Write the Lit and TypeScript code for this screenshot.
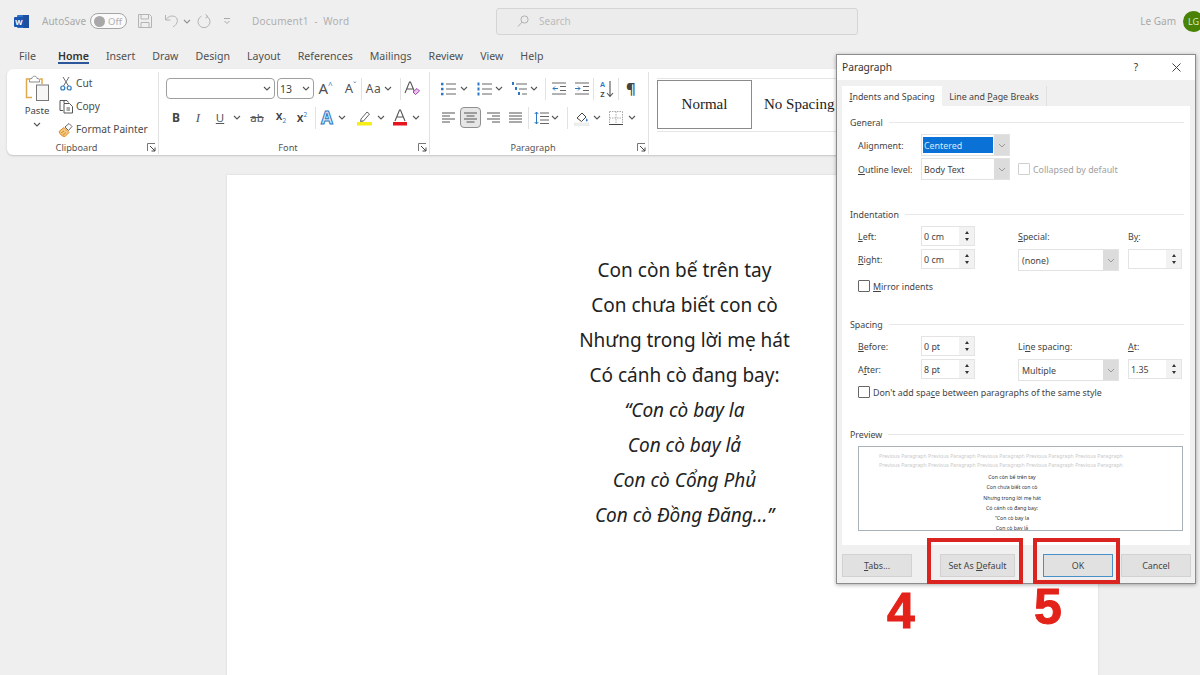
import { LitElement, html, css, svg, TemplateResult } from "lit";
import { customElement } from "lit/decorators.js";

type Item = [number, number, TemplateResult | string];

const chev = html`<svg width="8" height="5" viewBox="0 0 8 5"><path d="M1 1l3 3 3-3" fill="none" stroke="#555" stroke-width="1.1"/></svg>`;
const sep = html`<i class="vsep"></i>`;
const ic = (w: number, h: number, body: unknown) =>
  html`<svg width=${w} height=${h} viewBox="0 0 ${w} ${h}">${body}</svg>`;

/* Lays out a ribbon row from the icon centres measured on the ribbon */
function placed(left: number, items: Item[]) {
  let prev = left;
  return items.map(([cx, w, t]) => {
    const start = cx - w / 2;
    const m = start - prev;
    prev = start + w;
    return html`<span class="slot" style="margin-left:${m}px;width:${w}px">${t}</span>`;
  });
}

const lines = (ys: number[], x1: number, x2: number, c = "#666") =>
  ys.map((y) => svg`<path d="M${x1} ${y}H${x2}" stroke=${c} stroke-width="1"/>`);

const wordIcon = ic(15, 15, svg`<rect x="3" y="1" width="12" height="13" rx="1" fill="#2f72c8"/><rect x="9" y="1" width="6" height="13" fill="#1d4f9f"/><rect x="0" y="3" width="10" height="10" rx="1" fill="#1a56b0"/><text x="5" y="11" text-anchor="middle" font-size="7.5" font-weight="700" font-family="Noto Sans" fill="#fff">W</text>`);
const saveIcon = ic(16, 16, svg`<path d="M1.5 1.5h11l2 2v11h-13z M4 1.5v4.5h7.5v-4.5 M4 14.5v-5h8v5" fill="none" stroke="#b4b4b4" stroke-width="1"/>`);
const undoIcon = ic(16, 16, svg`<path d="M1.5 2v5h5 M1.5 7c3-4 7-5 10-3s2.500 7-2.500 10" fill="none" stroke="#b4b4b4" stroke-width="1"/>`);
const redoIcon = ic(15, 16, svg`<path d="M8.500 1.500l2.500 2-2.500 1.500 M9.500 3.200a6 6 0 1 1-5 0" fill="none" stroke="#b4b4b4" stroke-width="1"/>`);
const qatIcon = ic(8, 8, svg`<path d="M1 1.500h6 M1.500 4l2.500 2.500 2.500-2.500" fill="none" stroke="#aaa" stroke-width="1"/>`);
const searchIcon = ic(12, 12, svg`<circle cx="7.500" cy="4.500" r="3.600" fill="none" stroke="#b0b0b0"/><path d="M5 7.200L1 11.500" stroke="#b0b0b0"/>`);

const pasteIcon = ic(26, 27, svg`<path d="M8 4H2.500v18.500H8" fill="#fff" stroke="#e0a94f" stroke-width="1.500"/><path d="M15.500 4H18v5" fill="none" stroke="#e0a94f" stroke-width="1.500"/><path d="M5.500 5.500c0-2 1.500-2 2.500-2 0-3 5-3 5 0 1 0 2.500 0 2.500 2v1.500h-10z" fill="#fff" stroke="#8a8a8a"/><rect x="12.500" y="10" width="12" height="15.500" fill="#f6f6f6" stroke="#777"/>`);
const cutIcon = ic(12, 15, svg`<path d="M3 1l5.500 9 M9 1l-5.500 9" stroke="#6d6d6d" fill="none"/><circle cx="2.800" cy="12" r="2" fill="none" stroke="#2b79c2" stroke-width="1.200"/><circle cx="9.200" cy="12" r="2" fill="none" stroke="#2b79c2" stroke-width="1.200"/>`);
const copyIcon = ic(15, 15, svg`<path d="M5 1.500H1v10h3" fill="none" stroke="#555"/><path d="M5 1.500h3l1.500 2 M5 1.500V4" fill="none" stroke="#555"/><path d="M5 4.500h5.500l3 3v6.500H5z" fill="#fff" stroke="#555"/><path d="M7.500 9h3.500M7.500 11h3.500" stroke="#555"/>`);
const painterIcon = ic(16, 15, svg`<path d="M1 9.500l5-4 5 5-4 4c-3 0-5-2-6-5z" fill="#f3c77f" stroke="#e08a1e"/><path d="M7 5l4-3.500 3 3-3.500 4z" fill="#fff" stroke="#666"/><path d="M3 11l3-2 M5 13l3-2.500" stroke="#e08a1e"/>`);
const launcher = ic(9, 9, svg`<path d="M.5 8V.5H8" fill="none" stroke="#777"/><path d="M3 3l5 5M8 4.500V8H4.500" fill="none" stroke="#444"/>`);

const bigA = (size: number, arrow: string) => html`<span class="growa" style="font-size:${size}px">A<sup>${arrow}</sup></span>`;
const aText = html`<span class="atext">A</span>`;
const highlight = ic(16, 17, svg`<path d="M4 10l6-7 2.500 2-6 7-3 .5z" fill="#fff" stroke="#666"/><path d="M3 12h3" stroke="#888"/><rect x="0" y="13" width="15" height="3.500" fill="#f7ee19"/>`);
const fontColor = ic(16, 17, svg`<path d="M3 12L7.500 1h1L13 12 M5 8h6" fill="none" stroke="#555" stroke-width="1.100"/><rect x="1" y="13" width="14" height="3.500" fill="#e6141f"/>`);
const clearFmt = ic(16, 16, svg`<path d="M1 12L5.500 1h1L11 12 M3 8h6" fill="none" stroke="#555" stroke-width="1.100"/><path d="M9 11l4-3.500 2.500 2.500-4 3.500z" fill="#e9c6ec" stroke="#a23fae"/>`);
const strike = html`<span class="ab">ab</span>`;
const sub = html`<span class="xs">x<sub>2</sub></span>`;
const sup = html`<span class="xs">x<sup>2</sup></span>`;

const blue = "#2b79c2";
const bullets = ic(15, 14, svg`${[2, 7, 12].map((y) => svg`<rect x="0" y=${y - 1.2} width="2.500" height="2.500" fill=${blue}/>`)}${lines([2, 7, 12], 5, 15)}`);
const numbers = ic(15, 14, svg`${[2, 7, 12].map((y) => svg`<rect x=".5" y=${y - 1.5} width="2" height="3" fill=${blue}/>`)}${lines([2, 7, 12], 5, 15)}`);
const multilevel = ic(15, 14, svg`<rect x="0" y="0" width="2" height="3" fill=${blue}/><rect x="3" y="5" width="2" height="3" fill=${blue}/><rect x="6" y="10" width="2" height="3" fill=${blue}/>${lines([2], 4, 15)}${lines([7], 7, 15)}${lines([12], 10, 15)}`);
const indentDec = ic(14, 13, svg`${lines([1, 12], 0, 14)}${lines([4.500, 8.500], 8, 14)}<path d="M6 6.500H1M3 4.500L1 6.500l2 2" fill="none" stroke=${blue}/>`);
const indentInc = ic(14, 13, svg`${lines([1, 12], 0, 14)}${lines([4.500, 8.500], 8, 14)}<path d="M0 6.500h5M3 4.500l2 2-2 2" fill="none" stroke=${blue}/>`);
const sortIcon = ic(16, 18, svg`<text x="4.500" y="7" text-anchor="middle" font-size="7.500" font-family="Noto Sans" fill=${blue} font-weight="600">A</text><text x="4.500" y="17" text-anchor="middle" font-size="7.500" font-family="Noto Sans" fill="#444" font-weight="600">Z</text><path d="M12 1v15M9 13l3 3.500 3-3.500" fill="none" stroke="#555" stroke-width="1.100"/>`);
const pilcrow = html`<span class="pil">¶</span>`;
const alignL = ic(13, 11, svg`<path d="M0 1h13M0 4h8M0 7h13M0 10h8" stroke="#555"/>`);
const alignC = ic(13, 11, svg`<path d="M0 1h13M2.500 4h8M0 7h13M2.500 10h8" stroke="#555"/>`);
const alignR = ic(13, 11, svg`<path d="M0 1h13M5 4h8M0 7h13M5 10h8" stroke="#555"/>`);
const alignJ = ic(13, 11, svg`<path d="M0 1h13M0 4h13M0 7h13M0 10h13" stroke="#555"/>`);
const lineSp = ic(15, 14, svg`${lines([2, 5.500, 9, 12.500], 6, 15)}<path d="M2.500 1v12M.7 3l1.800-2 1.800 2M.7 11l1.800 2 1.800-2" fill="none" stroke=${blue}/>`);
const shading = ic(16, 16, svg`<path d="M3 8l5-5 4 4-4.500 4.500z" fill="#fff" stroke="#444"/><path d="M12.500 8c1 1.500 1.500 2 1 3-.8 1-2 0-1.500-1z" fill=${blue}/><rect x="0" y="13" width="15" height="3" fill="#f0f0f0" stroke="#ddd" stroke-width=".5"/>`);
const borders = ic(14, 14, svg`<path d="M.5.500h13M.5 7h13M7 .500v13M.5.500v13M13.500.500v13" stroke="#aaa" stroke-dasharray="1.500 1" fill="none"/><path d="M0 13.500h14" stroke="#444"/>`);

const fontRow1: Item[] = [
  [325.5, 16, bigA(15, "^")], [350.5, 16, bigA(13, "ˇ")], [361, 1, sep],
  [379, 26, html`<span class="aa">Aa ${chev}</span>`], [400, 1, sep], [412, 16, clearFmt],
];
const fontRow2: Item[] = [
  [176, 14, html`<b class="b">B</b>`], [198, 14, html`<i class="it">I</i>`], [220, 14, html`<span class="un">U</span>`], [237, 8, chev],
  [257, 18, strike], [281, 16, sub], [302, 16, sup], [315, 1, sep], [327, 16, aText], [342, 8, chev],
  [365, 16, highlight], [381, 8, chev], [400, 16, fontColor], [416, 8, chev],
];
const paraRow1: Item[] = [
  [448, 15, bullets], [464, 8, chev], [484, 15, numbers], [499, 8, chev], [519, 15, multilevel], [534, 8, chev], [545, 1, sep],
  [558.5, 14, indentDec], [581.5, 14, indentInc], [593, 1, sep], [605.5, 16, sortIcon], [618, 1, sep], [631, 12, pilcrow],
];
const paraRow2: Item[] = [
  [448, 13, alignL], [470.5, 21, html`<span class="pressed">${alignC}</span>`], [493, 13, alignR], [515, 13, alignJ], [528, 1, sep],
  [541, 15, lineSp], [555, 8, chev], [567, 1, sep], [581.5, 16, shading], [597, 8, chev], [616, 14, borders], [632, 8, chev],
];

const tabs = ["File", "Home", "Insert", "Draw", "Design", "Layout", "References", "Mailings", "Review", "View", "Help"];
const poem = ["Con còn bế trên tay", "Con chưa biết con cò", "Nhưng trong lời mẹ hát", "Có cánh cò đang bay:"];
const poemIt = ["“Con cò bay la", "Con cò bay lả", "Con cò Cổng Phủ", "Con cò Đồng Đăng…”"];
const prevLine = "Previous Paragraph Previous Paragraph Previous Paragraph Previous Paragraph Previous Paragraph";
const previewText = ["Con còn bế trên tay", "Con chưa biết con cò", "Nhưng trong lời mẹ hát", "Có cánh cò đang bay:", "“Con cò bay la", "Con cò bay lả"];

const chevGray = html`<svg width="8" height="5" viewBox="0 0 8 5"><path d="M1 1l3 3 3-3" fill="none" stroke="#999"/></svg>`;
const spin = (v: string) => html`<span class="spin"><span class="val">${v}</span><span class="arrows"><span class="up"></span><span class="dn"></span></span></span>`;
const select = (v: string, cls = "", sel = false) => html`<span class="select ${cls}"><span class="val ${sel ? "sel" : ""}">${v}</span><span class="drop">${chevGray}</span></span>`;

@customElement("app-root")
export class AppRoot extends LitElement {
  static styles = css`
    :host { display: block; width: 1200px; height: 675px; overflow: hidden; position: relative; background: #efefef; font-family: "Noto Sans", "Open Sans", sans-serif; color: #444; }
    svg { display: block; }
    .title { height: 42px; display: flex; align-items: center; padding-left: 14px; font-size: 10px; color: #a9a9a9; }
    .autosave { margin-left: 13px; width: 48px; }
    .toggle { width: 37px; height: 16px; box-sizing: border-box; border: 1px solid #a5a5a5; border-radius: 9px; background: #fafafa; display: flex; align-items: center; gap: 3px; padding-left: 3px; font-size: 9.5px; color: #b0b0b0; }
    .knob { width: 11px; height: 11px; border-radius: 50%; background: #a8a8a8; }
    .save { margin-left: 10px; }
    .undo { margin-left: 11px; }
    .uchev { margin-left: 3px; opacity: .6; }
    .redo { margin-left: 6px; }
    .qat { margin-left: 11px; }
    .doc { margin-left: 21px; width: 244px; letter-spacing: .2px; color: #b0b0b0; }
    .search { width: 362px; height: 27px; box-sizing: border-box; border: 1px solid #d5d5d5; border-radius: 3px; background: #ececec; display: flex; align-items: center; padding-left: 20px; gap: 10px; color: #bbb; }
    .user { margin-left: auto; display: flex; align-items: center; gap: 7px; margin-right: -4px; }
    .avatar { width: 21px; height: 21px; border-radius: 50%; background: #498205; color: #dcecc8; font-size: 9px; display: flex; align-items: center; justify-content: center; }

    .tabs { height: 27px; display: flex; align-items: center; gap: 17px; padding-left: 19px; font-size: 10.6px; color: #505050; box-sizing: border-box; }
    .tab { position: relative; }
    .tab.on { font-weight: 600; color: #333; margin-left: 5px; }
    .tab.on::after { content: ""; position: absolute; left: 0; right: 0; bottom: -1px; height: 2px; background: #2b579a; }

    .ribbon { margin-left: 7px; width: 1186px; height: 86px; box-sizing: border-box; background: #fff; border-radius: 6px; box-shadow: 0 1px 2px #c4c4c4; display: flex; padding: 3px 0 1px; }
    .group { position: relative; border-right: 1px solid #e2e2e2; display: flex; flex-direction: column; box-sizing: border-box; }
    .g-clip { width: 152px; }
    .g-font { width: 271px; }
    .g-para { width: 219px; }
    .gbody { flex: 1; }
    .glabel { height: 14px; display: flex; align-items: center; justify-content: center; font-size: 9.2px; color: #555; position: relative; padding-right: 12px; }
    .launch { position: absolute; right: 2px; top: 3px; }

    .clip { display: flex; padding-left: 13px; padding-top: 3px; }
    .paste { width: 34px; display: flex; flex-direction: column; align-items: center; font-size: 9.6px; color: #444; }
    .paste span { margin-top: 2px; line-height: 14px; }
    .paste svg:last-child { margin-top: 4px; }
    .cliplist { margin-left: 4px; display: flex; flex-direction: column; gap: 7px; font-size: 10.2px; color: #4a4a4a; }
    .clipitem { display: flex; align-items: center; height: 16px; }
    .clipicon { width: 16px; display: flex; justify-content: center; margin-right: 2px; }

    .r1 { display: flex; height: 28px; align-items: center; padding-top: 5px; box-sizing: border-box; }
    .r2 { display: flex; height: 23px; align-items: center; margin-top: 6px; }
    .slot { flex: none; display: flex; align-items: center; justify-content: center; height: 22px; }
    .vsep { display: block; width: 1px; height: 22px; background: #e2e2e2; }
    .combo { box-sizing: border-box; height: 21px; border: 1px solid #9f9f9f; border-radius: 4px; display: flex; align-items: center; justify-content: flex-end; padding-right: 3px; font-size: 10.5px; flex: none; }
    .c-name { width: 109px; margin-left: 7px; }
    .c-size { width: 37px; margin-left: 2px; justify-content: space-between; padding-left: 2px; }
    .growa { color: #505050; line-height: 1; }
    .growa sup { font-size: 8px; color: #2b79c2; vertical-align: top; line-height: 1; }
    .atext { font-size: 17px; line-height: 1; font-weight: 700; color: #d8e9f8; -webkit-text-stroke: 1px #2b79c2; }
    .aa { font-size: 12px; display: flex; gap: 3px; align-items: center; color: #555; letter-spacing: .5px; }
    .b { font-family: "Noto Sans"; font-size: 12px; color: #444; }
    .it { font-family: "Liberation Serif"; font-size: 13px; color: #555; }
    .un { font-size: 11.5px; text-decoration: underline; color: #555; }
    .ab { font-size: 11.5px; text-decoration: line-through; color: #555; }
    .xs { font-size: 12px; font-weight: 600; color: #444; line-height: 1; }
    .xs sub, .xs sup { font-size: 6.5px; color: #2b79c2; font-weight: 400; line-height: 1; }
    .pil { font-size: 15px; font-weight: 600; color: #444; line-height: 1; }
    .pressed { width: 21px; height: 21px; box-sizing: border-box; background: #e6e6e6; border: 1px solid #8f8f8f; border-radius: 4px; display: flex; align-items: center; justify-content: center; }

    .g-styles { flex: 1; border: 0; }
    .gallery { display: flex; height: 52px; margin: 6px 0 0 8px; border-top: 1px solid #e5e5e5; border-bottom: 1px solid #e5e5e5; font-family: "Liberation Serif", serif; font-size: 15px; color: #222; }
    .st { display: flex; align-items: center; justify-content: center; box-sizing: border-box; }
    .st.n { width: 95px; height: 49px; margin-top: 1px; border: 1.5px solid #8a8a8a; }
    .st.s { padding-left: 12px; white-space: nowrap; height: 50px; }

    .page { margin: 20px 0 0 227px; width: 871px; height: 520px; background: #fff; box-shadow: 0 0 2px #cfcfcf; box-sizing: border-box; padding: 78px 0 0 44px; text-align: center; font-size: 19px; line-height: 35px; color: #222; }
    .page em { display: block; }
    .page div { white-space: nowrap; }

    .dialog { position: absolute; left: 836px; top: 54px; width: 360px; height: 530px; box-sizing: border-box; background: #f0f0f0; border: 1px solid #8c8c8c; box-shadow: 0 1px 4px #00000055; display: flex; flex-direction: column; font-size: 8.9px; color: #444; }
    .dtitle { height: 25px; flex: none; background: #fff; display: flex; align-items: center; padding: 0 0 1px 5px; box-sizing: border-box; font-size: 10.2px; color: #333; }
    .dq { margin-left: auto; margin-right: 34px; font-size: 10px; }
    .dx { margin-right: 14px; }
    .dtabs { display: flex; padding: 6px 0 0 5px; height: 26px; box-sizing: border-box; flex: none; }
    .dtab { height: 20px; display: flex; align-items: center; justify-content: center; box-sizing: border-box; }
    .dtab.on { width: 100px; background: #fff; }
    .dtab.off { width: 105px; background: #f0f0f0; border-right: 1px solid #e0e0e0; }
    .panel { margin: 0 5px; height: 439px; flex: none; background: #fff; box-sizing: border-box; padding: 9px 6px 0 8px; }
    .legend { display: flex; align-items: center; gap: 6px; height: 14px; margin-bottom: 5px; }
    .legend::after { content: ""; flex: 1; height: 1px; background: #e8e8e8; }
    .form { display: grid; grid-template-columns: 63px 97px 110px 54px; grid-auto-rows: 23px; margin-left: 8px; align-items: start; }
    .form.wide { grid-auto-rows: 24px; }
    .form span.lbl { line-height: 22px; }
    .form.wide span.lbl { line-height: 24px; }
    .gap-gen { height: 25px; }
    .gap-mir { height: 7px; }
    .gap-sp { height: 24px; }
    .gap-dont { height: 3px; }
    .gap-prev { height: 28px; }
    .check { display: flex; align-items: center; gap: 3px; height: 14px; margin-left: 8px; }
    .check i { width: 12px; height: 12px; box-sizing: border-box; border: 1px solid #666; background: #fff; flex: none; border-radius: 1px; }
    .check.dis { margin: 0; height: 22px; color: #a0a0a0; }
    .check.dis i { border-color: #cfcfcf; }
    .spin { width: 54px; height: 20px; box-sizing: border-box; border: 1px solid #e4e4e4; display: flex; align-items: center; background: #fff; }
    .spin .val { flex: 1; padding-left: 2px; }
    .arrows { width: 15px; height: 18px; background: #f2f2f2; display: flex; flex-direction: column; align-items: center; justify-content: center; gap: 4px; }
    .up, .dn { width: 0; height: 0; border-left: 2.500px solid transparent; border-right: 2.500px solid transparent; }
    .up { border-bottom: 3px solid #333; }
    .dn { border-top: 3px solid #333; }
    .select { height: 22px; box-sizing: border-box; border: 1px solid #e2e2e2; display: flex; align-items: stretch; background: #fff; }
    .select.s89 { width: 89px; }
    .select.s101 { width: 101px; }
    .select .val { flex: 1; display: flex; align-items: center; padding-left: 1px; margin: 2px 1px; }
    .select.s101 .val { padding-left: 2px; }
    .select .val.sel { background: #0a72d6; color: #d8e8f8; }
    .drop { width: 15px; background: #dcdcdc; display: flex; align-items: center; justify-content: center; flex: none; }
    .box { margin-left: 8px; width: 325px; height: 85px; box-sizing: border-box; border: 1px solid #a9b2b8; overflow: hidden; text-align: center; font-size: 5.2px; color: #333; padding-top: 5px; }
    .box .prev { color: #c9c9c9; line-height: 9px; white-space: nowrap; text-align: left; padding-left: 20px; }
    .box .cur { line-height: 10.300px; height: 10.300px; padding-right: 17px; }
    .box .first { margin-top: 2px; }
    .foot { display: flex; padding: 9px 0 0 5px; }
    .btn { height: 23px; box-sizing: border-box; background: #e1e1e1; border: 1px solid #d2d2d2; display: flex; align-items: center; justify-content: center; flex: none; }
    .b-tabs { width: 70px; margin-right: 28px; }
    .b-def { width: 75px; margin-right: 28px; }
    .b-ok { width: 70px; margin-right: 8px; border-color: #4a90c8; }
    .b-can { width: 70px; }

    .mark { position: absolute; border: 4px solid #d9241f; box-sizing: border-box; top: 538px; height: 46px; }
    .m4 { left: 927px; width: 96px; }
    .m5 { left: 1033px; width: 87px; }
    .num { position: absolute; font-family: "Liberation Sans", sans-serif; font-weight: 700; font-size: 50px; line-height: 58px; color: #e32219; -webkit-text-stroke: 1px #e32219; }
    .n4 { left: 887px; top: 582px; }
    .n5 { left: 1034px; top: 578px; }
  `;

  render() {
    return html`
      <div class="title">
        ${wordIcon}
        <span class="autosave">AutoSave</span>
        <span class="toggle"><span class="knob"></span>Off</span>
        <span class="save">${saveIcon}</span>
        <span class="undo">${undoIcon}</span>
        <span class="uchev">${chev}</span>
        <span class="redo">${redoIcon}</span>
        <span class="qat">${qatIcon}</span>
        <span class="doc">Document1 &nbsp;-&nbsp; Word</span>
        <span class="search">${searchIcon}<span>Search</span></span>
        <span class="user"><span>Le Gam</span><span class="avatar">LG</span></span>
      </div>
      <div class="tabs">${tabs.map((t) => html`<span class="tab ${t === "Home" ? "on" : ""}">${t}</span>`)}</div>
      <div class="ribbon">
        <section class="group g-clip">
          <div class="gbody clip">
            <div class="paste">${pasteIcon}<span>Paste</span>${chev}</div>
            <div class="cliplist">
              <div class="clipitem"><span class="clipicon">${cutIcon}</span>Cut</div>
              <div class="clipitem"><span class="clipicon">${copyIcon}</span>Copy</div>
              <div class="clipitem"><span class="clipicon">${painterIcon}</span>Format Painter</div>
            </div>
          </div>
          <div class="glabel">Clipboard<span class="launch">${launcher}</span></div>
        </section>
        <section class="group g-font">
          <div class="gbody">
            <div class="r1">
              <span class="combo c-name">${chev}</span>
              <span class="combo c-size"><span>13</span>${chev}</span>
              ${placed(314, fontRow1)}
            </div>
            <div class="r2">${placed(159, fontRow2)}</div>
          </div>
          <div class="glabel">Font<span class="launch">${launcher}</span></div>
        </section>
        <section class="group g-para">
          <div class="gbody">
            <div class="r1">${placed(430, paraRow1)}</div>
            <div class="r2">${placed(430, paraRow2)}</div>
          </div>
          <div class="glabel">Paragraph<span class="launch">${launcher}</span></div>
        </section>
        <section class="group g-styles">
          <div class="gallery">
            <span class="st n">Normal</span>
            <span class="st s">No Spacing</span>
          </div>
        </section>
      </div>
      <main class="page">
        ${poem.map((l) => html`<div>${l}</div>`)}
        ${poemIt.map((l) => html`<div><em>${l}</em></div>`)}
      </main>

      <div class="dialog">
        <div class="dtitle">Paragraph<span class="dq">?</span><span class="dx">${ic(9, 9, svg`<path d="M.5.500l8 8M8.500.500l-8 8" stroke="#444"/>`)}</span></div>
        <div class="dtabs">
          <span class="dtab on"><span><u>I</u>ndents and Spacing</span></span>
          <span class="dtab off"><span>Line and <u>P</u>age Breaks</span></span>
        </div>
        <div class="panel">
          <div class="legend">General</div>
          <div class="form wide">
            <span class="lbl">Ali<u>g</u>nment:</span>${select("Centered", "s89", true)}<span></span><span></span>
            <span class="lbl"><u>O</u>utline level:</span>${select("Body Text", "s89")}
            <span class="check dis"><i></i>Collapsed by default</span><span></span>
          </div>
          <div class="gap-gen"></div>
          <div class="legend">Indentation</div>
          <div class="form">
            <span class="lbl"><u>L</u>eft:</span>${spin("0 cm")}<span class="lbl"><u>S</u>pecial:</span><span class="lbl">B<u>y</u>:</span>
            <span class="lbl"><u>R</u>ight:</span>${spin("0 cm")}${select("(none)", "s101")}${spin("")}
          </div>
          <div class="gap-mir"></div>
          <div class="check"><i></i><span><u>M</u>irror indents</span></div>
          <div class="gap-sp"></div>
          <div class="legend">Spacing</div>
          <div class="form">
            <span class="lbl"><u>B</u>efore:</span>${spin("0 pt")}<span class="lbl">Li<u>n</u>e spacing:</span><span class="lbl"><u>A</u>t:</span>
            <span class="lbl">A<u>f</u>ter:</span>${spin("8 pt")}${select("Multiple", "s101")}${spin("1.35")}
          </div>
          <div class="gap-dont"></div>
          <div class="check"><i></i><span>Don't add spa<u>c</u>e between paragraphs of the same style</span></div>
          <div class="gap-prev"></div>
          <div class="legend">Preview</div>
          <div class="box">
            <div class="prev">${prevLine}</div>
            <div class="prev">${prevLine}</div>
            ${previewText.map((t, i) => html`<div class="cur ${i === 0 ? "first" : ""}">${t}</div>`)}
          </div>
        </div>
        <div class="foot">
          <span class="btn b-tabs"><span><u>T</u>abs...</span></span>
          <span class="btn b-def"><span>Set As <u>D</u>efault</span></span>
          <span class="btn b-ok">OK</span>
          <span class="btn b-can">Cancel</span>
        </div>
      </div>

      <div class="mark m4"></div>
      <div class="mark m5"></div>
      <div class="num n4">4</div>
      <div class="num n5">5</div>
    `;
  }
}
